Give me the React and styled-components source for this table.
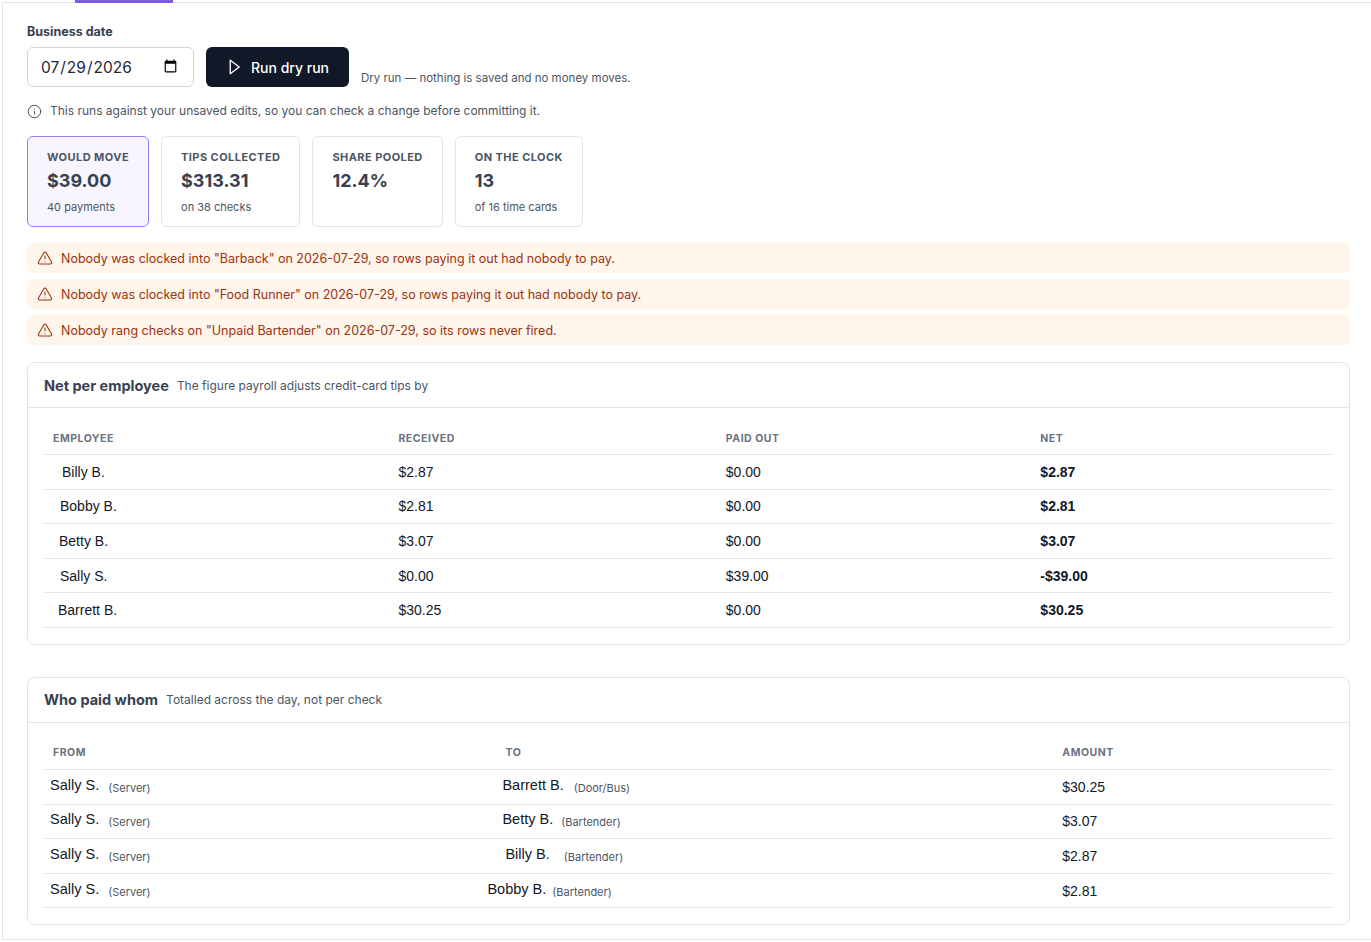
import React from 'react';
import styled, { createGlobalStyle } from 'styled-components';
import { Info, TriangleAlert } from 'lucide-react';

const GlobalStyle = createGlobalStyle`
  html, body {
    margin: 0;
    padding: 0;
    background: #ffffff;
  }
  body {
    font-family: Inter, Roboto, "Noto Sans", sans-serif;
    color: #111827;
  }
`;

const stats = [
  { label: 'Would move', value: '$39.00', sub: '40 payments', active: true },
  { label: 'Tips collected', value: '$313.31', sub: 'on 38 checks' },
  { label: 'Share pooled', value: '12.4%' },
  { label: 'On the clock', value: '13', sub: 'of 16 time cards' },
];

const warnings = [
  'Nobody was clocked into "Barback" on 2026-07-29, so rows paying it out had nobody to pay.',
  'Nobody was clocked into "Food Runner" on 2026-07-29, so rows paying it out had nobody to pay.',
  'Nobody rang checks on "Unpaid Bartender" on 2026-07-29, so its rows never fired.',
];

// dx: small per-row offsets of the name cells, as they sit in the shot
const netRows = [
  { name: 'Billy B.', dx: 9, received: '$2.87', paid: '$0.00', net: '$2.87' },
  { name: 'Bobby B.', dx: 7, received: '$2.81', paid: '$0.00', net: '$2.81' },
  { name: 'Betty B.', dx: 6, received: '$3.07', paid: '$0.00', net: '$3.07' },
  { name: 'Sally S.', dx: 7, received: '$0.00', paid: '$39.00', net: '-$39.00' },
  { name: 'Barrett B.', dx: 5, received: '$30.25', paid: '$0.00', net: '$30.25' },
];

const payments = [
  { from: 'Sally S.', fromRole: 'Server', to: 'Barrett B.', toRole: 'Door/Bus', dx: -3, gap: 10, amount: '$30.25' },
  { from: 'Sally S.', fromRole: 'Server', to: 'Betty B.', toRole: 'Bartender', dx: -3, gap: 8, amount: '$3.07' },
  { from: 'Sally S.', fromRole: 'Server', to: 'Billy B.', toRole: 'Bartender', dx: 0, gap: 14, amount: '$2.87' },
  { from: 'Sally S.', fromRole: 'Server', to: 'Bobby B.', toRole: 'Bartender', dx: -18, gap: 6, amount: '$2.81' },
];

const PlayIcon = () => (
  <svg width="18" height="18" viewBox="0 0 24 24" fill="none" stroke="currentColor" strokeWidth="1.8" strokeLinejoin="round">
    <path d="M7 3 L19 12 L7 21 Z" />
  </svg>
);

const App = () => {
  return (
    <>
      <GlobalStyle />
      <TabStrip>
        <TabIndicator />
      </TabStrip>
      <Panel>
        <Field>
          <FieldLabel>Business date</FieldLabel>
          <Controls>
            <DateInput type="date" defaultValue="2026-07-29" />
            <RunButton type="button">
              <PlayIcon />
              Run dry run
            </RunButton>
            <Note>Dry run — nothing is saved and no money moves.</Note>
          </Controls>
        </Field>
        <Hint>
          <Info size={15} strokeWidth={1.6} />
          This runs against your unsaved edits, so you can check a change before committing it.
        </Hint>

        <Stats>
          {stats.map((s) => (
            <StatCard key={s.label} $active={s.active}>
              <StatLabel>{s.label}</StatLabel>
              <StatValue>{s.value}</StatValue>
              {s.sub && <StatSub>{s.sub}</StatSub>}
            </StatCard>
          ))}
        </Stats>

        <Warnings>
          {warnings.map((w) => (
            <Warning key={w}>
              <TriangleAlert size={16} strokeWidth={1.6} />
              {w}
            </Warning>
          ))}
        </Warnings>

        <Card>
          <CardHeader>
            <CardTitle>Net per employee</CardTitle>
            <CardSubtitle>The figure payroll adjusts credit-card tips by</CardSubtitle>
          </CardHeader>
          <CardBody>
            <Table>
              <colgroup>
                <col style={{ width: '26.8%' }} />
                <col style={{ width: '25.4%' }} />
                <col style={{ width: '24.4%' }} />
                <col style={{ width: '23.4%' }} />
              </colgroup>
              <thead>
                <tr>
                  <Th>Employee</Th>
                  <Th>Received</Th>
                  <Th>Paid out</Th>
                  <Th>Net</Th>
                </tr>
              </thead>
              <tbody>
                {netRows.map((r) => (
                  <tr key={r.name}>
                    <Td>
                      <Name $dx={r.dx}>{r.name}</Name>
                    </Td>
                    <Td>{r.received}</Td>
                    <Td>{r.paid}</Td>
                    <Td $strong>{r.net}</Td>
                  </tr>
                ))}
              </tbody>
            </Table>
          </CardBody>
        </Card>

        <Card>
          <CardHeader>
            <CardTitle>Who paid whom</CardTitle>
            <CardSubtitle>Totalled across the day, not per check</CardSubtitle>
          </CardHeader>
          <CardBody>
            <Table>
              <colgroup>
                <col style={{ width: '35.1%' }} />
                <col style={{ width: '43.2%' }} />
                <col style={{ width: '21.7%' }} />
              </colgroup>
              <thead>
                <tr>
                  <Th>From</Th>
                  <Th>To</Th>
                  <Th>Amount</Th>
                </tr>
              </thead>
              <tbody>
                {payments.map((p) => (
                  <tr key={p.to}>
                    <Td>
                      <Name $dx={-3} $lift>{p.from}</Name>
                      <Role $gap={9}>({p.fromRole})</Role>
                    </Td>
                    <Td>
                      <Name $dx={p.dx} $lift>{p.to}</Name>
                      <Role $gap={p.gap}>({p.toRole})</Role>
                    </Td>
                    <Td>{p.amount}</Td>
                  </tr>
                ))}
              </tbody>
            </Table>
          </CardBody>
        </Card>
      </Panel>
    </>
  );
};

const TabStrip = styled.div`
  height: 2px;
  display: flex;
`;

const TabIndicator = styled.div`
  margin-left: 75px;
  width: 98px;
  height: 3px;
  background: #7c5ce8;
  position: relative;
  z-index: 1;
`;

const Panel = styled.div`
  margin-left: 2px;
  border: 1px solid #dde5ee;
  border-right: none;
  padding: 20px 21px 14px 24px;
  display: flex;
  flex-direction: column;
`;

const Field = styled.div`
  display: flex;
  flex-direction: column;
`;

const FieldLabel = styled.label`
  font-size: 12.5px;
  line-height: 18px;
  font-weight: 700;
  color: #374151;
  margin-bottom: 6px;
`;

const Controls = styled.div`
  display: flex;
  align-items: flex-end;
  gap: 12px;
`;

const DateInput = styled.input`
  box-sizing: border-box;
  width: 167px;
  height: 40px;
  padding: 0 13px 0 12px;
  border: 1px solid #d1d5db;
  border-radius: 6px;
  font-family: Inter, sans-serif;
  font-size: 15.5px;
  color: #1f2937;
  background: #fff;
`;

const RunButton = styled.button`
  box-sizing: border-box;
  height: 40px;
  padding: 0 20px 0 19px;
  display: flex;
  align-items: center;
  gap: 8px;
  border: none;
  border-radius: 6px;
  background: #111827;
  color: #ffffff;
  font-family: Inter, sans-serif;
  font-size: 14px;
  font-weight: 500;
`;

const Note = styled.span`
  font-size: 11.5px;
  line-height: 18px;
  color: #4b5563;
`;

const Hint = styled.div`
  margin-top: 15px;
  display: flex;
  align-items: center;
  gap: 8px;
  font-size: 12px;
  line-height: 18px;
  color: #4b5563;
  svg {
    color: #4b5563;
    flex-shrink: 0;
  }
`;

const Stats = styled.div`
  margin-top: 16px;
  display: flex;
  gap: 12px;
`;

const StatCard = styled.div`
  box-sizing: border-box;
  height: 91px;
  padding: 12px 19px 11px;
  border: 1px solid ${(p) => (p.$active ? '#9b7cf2' : '#dde5ee')};
  background: ${(p) => (p.$active ? '#f8f5ff' : '#ffffff')};
  border-radius: 6px;
  display: flex;
  flex-direction: column;
`;

const StatLabel = styled.div`
  font-size: 11px;
  line-height: 16px;
  font-weight: 700;
  letter-spacing: 0.04em;
  text-transform: uppercase;
  color: #4b5563;
  white-space: nowrap;
`;

const StatValue = styled.div`
  margin-top: 3px;
  font-size: 18px;
  line-height: 26px;
  font-weight: 700;
  color: #374151;
`;

const StatSub = styled.div`
  margin-top: 5px;
  font-size: 11px;
  line-height: 16px;
  color: #4b5563;
`;

const Warnings = styled.div`
  margin-top: 16px;
  display: flex;
  flex-direction: column;
  gap: 6px;
`;

const Warning = styled.div`
  height: 30px;
  padding: 0 10px;
  display: flex;
  align-items: center;
  gap: 8px;
  border-radius: 6px;
  background: #fff5eb;
  color: #9a3412;
  font-size: 12.5px;
  svg {
    flex-shrink: 0;
  }
`;

const Card = styled.section`
  margin-top: 17px;
  border: 1px solid #dde5ee;
  border-radius: 8px;
  & + & {
    margin-top: 32px;
  }
`;

const CardHeader = styled.header`
  height: 44px;
  padding: 0 16px;
  display: flex;
  align-items: center;
  gap: 8px;
  border-bottom: 1px solid #dde5ee;
`;

const CardTitle = styled.h3`
  margin: 0;
  font-size: 14.5px;
  font-weight: 700;
  color: #374151;
`;

const CardSubtitle = styled.span`
  font-size: 12px;
  color: #4b5563;
`;

const CardBody = styled.div`
  padding: 14px 16px 16px;
`;

const Table = styled.table`
  width: 100%;
  border-collapse: collapse;
  table-layout: fixed;
`;

const Th = styled.th`
  height: 32px;
  padding: 0 9px;
  text-align: left;
  vertical-align: middle;
  font-size: 10.5px;
  font-weight: 700;
  letter-spacing: 0.05em;
  text-transform: uppercase;
  color: #6b7280;
  border-bottom: 1px solid #e2e8f0;
`;

const Td = styled.td`
  height: 33.6px;
  padding: 0 9px;
  font-family: "Liberation Sans", Arial, sans-serif;
  font-size: 14px;
  font-weight: ${(p) => (p.$strong ? 700 : 400)};
  color: #111827;
  border-bottom: 1px solid #e2e8f0;
  white-space: nowrap;
`;

const Name = styled.span`
  display: inline-block;
  margin-left: ${(p) => p.$dx}px;
  font-size: ${(p) => (p.$lift ? '14.5px' : '14px')};
  transform: ${(p) => (p.$lift ? 'translateY(-2px)' : 'none')};
`;

const Role = styled.span`
  margin-left: ${(p) => p.$gap}px;
  font-family: Inter, sans-serif;
  font-size: 11px;
  color: #4b5563;
`;

export default App;
